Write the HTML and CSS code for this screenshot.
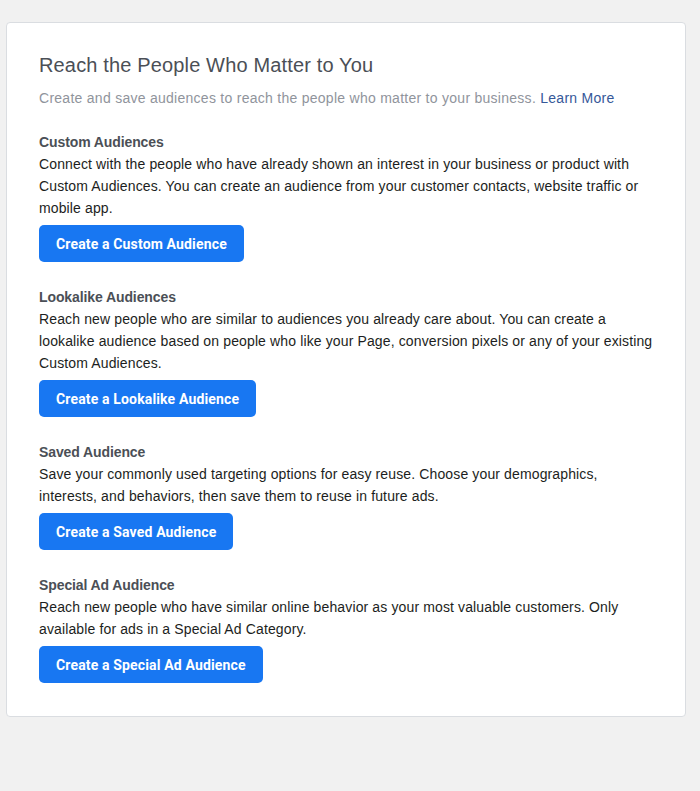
FILE: index.html
```html
<!DOCTYPE html>
<html>
<head>
<meta charset="utf-8">
<link rel="stylesheet" href="styles.css">
</head>
<body>
<div class="card">
  <h1 class="title">Reach the People Who Matter to You</h1>
  <p class="subtitle">Create and save audiences to reach the people who matter to your business. <a class="link" href="#">Learn More</a></p>

  <div class="section">
    <div class="sec-head">Custom Audiences</div>
    <p class="sec-body">Connect with the people who have already shown an interest in your business or product with Custom Audiences. You can create an audience from your customer contacts, website traffic or mobile app.</p>
    <button class="btn">Create a Custom Audience</button>
  </div>

  <div class="section">
    <div class="sec-head">Lookalike Audiences</div>
    <p class="sec-body">Reach new people who are similar to audiences you already care about. You can create a lookalike audience based on people who like your Page, conversion pixels or any of your existing Custom Audiences.</p>
    <button class="btn">Create a Lookalike Audience</button>
  </div>

  <div class="section">
    <div class="sec-head">Saved Audience</div>
    <p class="sec-body">Save your commonly used targeting options for easy reuse. Choose your demographics, interests, and behaviors, then save them to reuse in future ads.</p>
    <button class="btn">Create a Saved Audience</button>
  </div>

  <div class="section">
    <div class="sec-head">Special Ad Audience</div>
    <p class="sec-body">Reach new people who have similar online behavior as your most valuable customers. Only available for ads in a Special Ad Category.</p>
    <button class="btn">Create a Special Ad Audience</button>
  </div>
</div>
</body>
</html>
```
FILE: styles.css
```css
html, body {
  margin: 0;
  padding: 0;
  background: #f1f1f1;
  font-family: "Liberation Sans", Arial, sans-serif;
  color: #1c1e21;
}
body {
  padding: 22px 14px 0 6px;
}
.card {
  background: #fff;
  border: 1px solid #dadde1;
  border-radius: 4px;
  padding: 30px 26px 33px 32px;
}
.title {
  margin: 0;
  font-size: 20px;
  line-height: 24px;
  font-weight: normal;
  color: #4b4f56;
  letter-spacing: 0.15px;
}
.subtitle {
  margin: 11px 0 0 0;
  font-size: 14px;
  line-height: 20px;
  color: #90949c;
  letter-spacing: 0.27px;
}
.link {
  color: #365899;
  text-decoration: none;
}
.section {
  margin-top: 25px;
}
.section:first-of-type {
  margin-top: 24px;
}
.sec-head {
  font-size: 14px;
  font-weight: bold;
  line-height: 21px;
  color: #4b4f56;
  letter-spacing: -0.1px;
}
.sec-body {
  margin: 0;
  font-size: 14px;
  line-height: 22px;
  color: #1c1e21;
  letter-spacing: 0.13px;
}
.btn {
  margin-top: 6px;
  display: block;
  height: 37px;
  padding: 0 17px;
  border: none;
  border-radius: 5px;
  background: #1877f2;
  color: #fff;
  font-family: Roboto, "Liberation Sans", sans-serif;
  font-weight: bold;
  font-size: 14px;
  letter-spacing: 0.15px;
}
```
